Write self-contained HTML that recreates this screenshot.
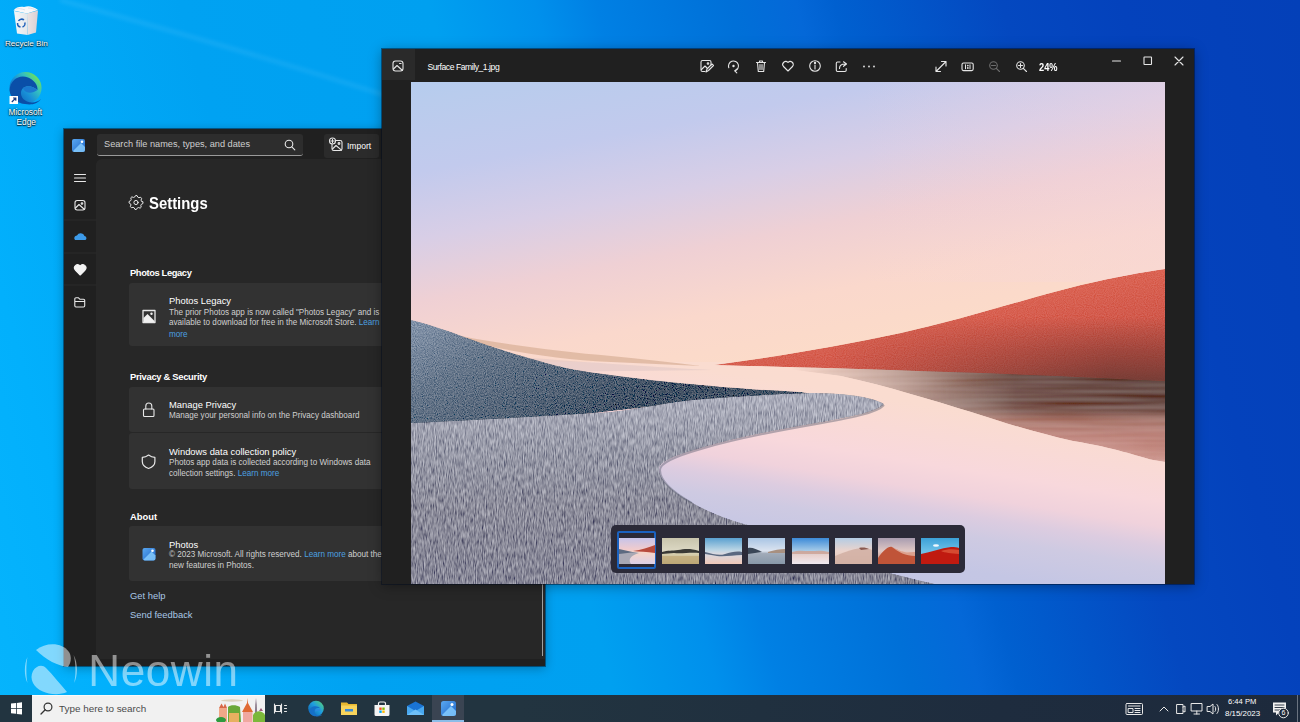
<!DOCTYPE html>
<html><head><meta charset="utf-8">
<style>
*{box-sizing:border-box;margin:0;padding:0}
html,body{width:1300px;height:722px;overflow:hidden;font-family:"Liberation Sans",sans-serif}
body{position:relative;background:#0078d7}
.abs{position:absolute}
#desk{position:absolute;left:0;top:0;width:1300px;height:722px;
 background:linear-gradient(75deg,#06b4fc 0%,#02b0fc 7.8%,#00a2f2 25%,#00a0f0 41.6%,#0090ec 48.7%,#0080e4 52.8%,#0070d8 61.7%,#0468d8 66.2%,#0060d0 68.8%,#0448c0 80%,#0442bc 88%,#0440b8 100%);}
.txt{position:absolute;white-space:nowrap;line-height:1}
/* settings window */
#sw{position:absolute;left:64px;top:129px;width:481px;height:537px;background:#202020;box-shadow:0 0 0 1px rgba(0,10,30,.45),0 2px 10px rgba(0,0,0,.3)}
#sp{position:absolute;left:32px;top:30px;width:449px;height:500px;background:#272727;border-radius:6px 0 0 0}
.card{position:absolute;left:31px;width:260px;background:#323232;border-radius:3px}
.hdr{position:absolute;left:66px;font-weight:bold;color:#fff;font-size:9.4px;white-space:nowrap;line-height:1}
.ct{position:absolute;left:105px;color:#fff;font-size:9.4px;white-space:nowrap;line-height:1}
.cd{position:absolute;left:105px;color:#d0d0d0;font-size:8.15px;white-space:nowrap;line-height:1}
.lk{color:#4ca0e0}
/* photos window */
#pw{position:absolute;left:382px;top:49px;width:812px;height:535px;background:#202020;box-shadow:0 0 0 1px rgba(0,10,30,.45),0 2px 12px rgba(0,0,0,.35)}
#tb{position:absolute;left:0;top:695px;width:1300px;height:27px;background:linear-gradient(90deg,#223440 0%,#223440 40%,#1e2c3e 77%,#1d2a3c 100%)}
</style></head>
<body>
<div id="desk"></div>
<svg class="abs" style="left:0;top:0" width="1300" height="722" viewBox="0 0 1300 722"><defs><filter id="rb"><feGaussianBlur stdDeviation="2"/></filter></defs>
<path d="M60 0 C150 25 260 55 400 100" stroke="#7fd4ff" stroke-width="3" fill="none" opacity=".22" filter="url(#rb)"/>

</svg>

<!-- desktop icons -->
<svg class="abs" style="left:0;top:0" width="60" height="130" viewBox="0 0 60 130">
 <defs>
  <linearGradient id="rbf" x1="0" y1="0" x2="1" y2="0"><stop offset="0" stop-color="#f4f6f8"/><stop offset="1" stop-color="#e4e8ec"/></linearGradient>
  <linearGradient id="rbs" x1="0" y1="0" x2="1" y2="0"><stop offset="0" stop-color="#ece4e4"/><stop offset="1" stop-color="#d8d0d4"/></linearGradient>
  <linearGradient id="eg1" x1="0.1" y1="0.9" x2="0.9" y2="0.2"><stop offset="0" stop-color="#0c5ab0"/><stop offset=".45" stop-color="#1890d8"/><stop offset=".75" stop-color="#34c0c0"/><stop offset="1" stop-color="#6ae060"/></linearGradient>
 </defs>
 <!-- recycle bin -->
 <path d="M14 11 L27 13.5 L27.5 35 L17 33.5Z" fill="url(#rbf)"/>
 <path d="M27 13.5 L38 10.5 L36 32.5 L27.5 35Z" fill="url(#rbs)"/>
 <path d="M13.5 10.5 C16 7 20 6.5 24 7 C28 5.5 33 6 38 10 L27 13.5 Z" fill="#f8f8fa"/>
 <path d="M16 9 C19 8 22 9 25 10 M28 8 C31 8 34 9 36 10" stroke="#d8dce4" stroke-width=".8" fill="none"/>
 <path d="M18.5 21 A3.6 3.6 0 0 1 24 20 M24.8 22.5 A3.6 3.6 0 0 1 22.5 27 M20.5 27 A3.6 3.6 0 0 1 17.6 23" stroke="#1f5fb8" stroke-width="1.5" fill="none"/>
 <!-- edge -->
 <circle cx="25.5" cy="88" r="16" fill="url(#eg1)"/>
 <path d="M9.6 90 C10.5 79 20 74 28 77.5 C34 80 38 85 37.5 90 C33 86 27 85 23 88 C19 92 21 99 27 101.5 C32 103.5 38 102 41 99 C37 104.5 31 105 25 104 C16 102.5 9.8 97 9.6 90Z" fill="#0a4fa8"/>
 <path d="M23 88 C27 85 33 86 37.5 90 C35 92 31 93 28 92.5 C25 92 23.5 90 23 88Z" fill="#1b78d0"/>
 <rect x="9.5" y="96" width="8.5" height="8" fill="#fff"/>
 <path d="M11.8 102 L15.8 98 M13 98 H15.8 V100.8" stroke="#1a3a80" stroke-width="1.2" fill="none"/>
</svg>
<div class="txt" style="left:5px;top:40px;font-size:8.1px;color:#fff;text-shadow:0 0 2px rgba(0,0,0,.9),0 1px 1px rgba(0,0,0,.8)">Recycle Bin</div>
<div class="txt" style="left:8.5px;top:107.5px;font-size:8.3px;color:#fff;text-shadow:0 0 2px rgba(0,0,0,.9),0 1px 1px rgba(0,0,0,.8)">Microsoft</div>
<div class="txt" style="left:16.5px;top:117.5px;font-size:8.3px;color:#fff;text-shadow:0 0 2px rgba(0,0,0,.9),0 1px 1px rgba(0,0,0,.8)">Edge</div>

<!-- settings window -->
<div id="sw">
 
 <div class="abs" style="left:33px;top:5px;width:206px;height:22px;background:#2d2d2d;border-radius:3px;border-bottom:1px solid #9a9a9a"></div>
 <div class="txt" style="left:40px;top:11px;font-size:9.2px;color:#cfcfcf">Search file names, types, and dates</div>
 <div class="abs" style="left:260px;top:5px;width:55px;height:24px;background:#2b2b2b;border-radius:3px"></div>
 <div class="txt" style="left:283px;top:13px;font-size:8.5px;color:#fff">Import</div>
 <div id="sp"></div>
 <div class="txt" style="left:84.5px;top:65.5px;font-size:17px;font-weight:bold;color:#fff;transform:scaleX(0.875);transform-origin:0 0">Settings</div>
 <div class="hdr" style="top:139px;letter-spacing:-0.4px">Photos Legacy</div>
 <div class="card" style="left:65px;top:154px;height:63px"></div>
 <div class="ct" style="top:167px">Photos Legacy</div>
 <div class="cd" style="top:180px">The prior Photos app is now called "Photos Legacy" and is</div>
 <div class="cd" style="top:190px">available to download for free in the Microsoft Store. <span class="lk">Learn</span></div>
 <div class="cd" style="top:202px"><span class="lk">more</span></div>
 <div class="hdr" style="top:243px;letter-spacing:-0.3px">Privacy &amp; Security</div>
 <div class="card" style="left:65px;top:258px;height:45px"></div>
 <div class="ct" style="top:271px">Manage Privacy</div>
 <div class="cd" style="top:283px">Manage your personal info on the Privacy dashboard</div>
 <div class="card" style="left:65px;top:304px;height:56px"></div>
 <div class="ct" style="top:318px">Windows data collection policy</div>
 <div class="cd" style="top:330px">Photos app data is collected according to Windows data</div>
 <div class="cd" style="top:341px">collection settings. <span class="lk">Learn more</span></div>
 <div class="hdr" style="top:383px">About</div>
 <div class="card" style="left:65px;top:397px;height:55px"></div>
 <div class="ct" style="top:411px">Photos</div>
 <div class="cd" style="top:422px">© 2023 Microsoft. All rights reserved. <span class="lk">Learn more</span> about the</div>
 <div class="cd" style="top:433px">new features in Photos.</div>
 <div class="txt" style="left:66px;top:462px;font-size:9.4px;color:#a9c8e6">Get help</div>
 <div class="txt" style="left:66px;top:481px;font-size:9.4px;color:#a9c8e6">Send feedback</div>
 <div class="abs" style="left:478px;top:455px;width:1px;height:72px;background:#a0a0a0"></div>
</div>

<svg class="abs" style="left:64px;top:129px" width="481" height="537" viewBox="0 0 481 537" fill="none" stroke="#e8e8e8" stroke-width="1.1" stroke-linecap="round" stroke-linejoin="round">
 <defs><linearGradient id="appg" x1="0" y1="0" x2="1" y2="1"><stop offset="0" stop-color="#5aa8f0"/><stop offset="1" stop-color="#1c64c8"/></linearGradient></defs>
 <!-- app icon -->
 <rect x="8" y="10" width="13" height="13" rx="2" fill="url(#appg)" stroke="none"/>
 <path d="M9 22 L17 14 L21 18 L21 21 A2 2 0 0 1 19 23 L10 23Z" fill="#8ad0ff" stroke="none" opacity=".8"/>
 <circle cx="18" cy="12.8" r="1.3" fill="#fff" stroke="none"/>
 <!-- search -->
 <circle cx="225" cy="15" r="3.8"/><path d="M227.8 17.8 L230.8 20.8"/>
 <!-- import icon -->
 <rect x="268" y="11.5" width="10" height="10" rx="1.8"/><path d="M268.5 20 L272 16.5 L277.5 21.2"/><circle cx="275" cy="14.5" r="0.9"/>
 <circle cx="268.5" cy="12" r="3" fill="#202020"/><path d="M268.5 10.3 V13.7 M266.8 12 H270.2"/>
 <!-- hamburger -->
 <path d="M10.5 45.5 H21.5 M10.5 49 H21.5 M10.5 52.5 H21.5"/>
 <!-- gallery -->
 <rect x="11" y="71.5" width="10" height="9.5" rx="2.2"/><path d="M11.5 79 L15 75.5 L20.5 80.5"/><circle cx="18" cy="74.5" r="0.8"/>
 <!-- separators -->
 <path d="M0 91 H33 M0 124 H33 M0 156 H33" stroke="#2b2b2b" stroke-width="1"/>
 <!-- cloud -->
 <path d="M11 111 A2.6 2.6 0 0 1 13 106.6 A4 4 0 0 1 20.5 107 A2.2 2.2 0 0 1 21.5 111Z" fill="#3d9be9" stroke="none"/>
 <!-- heart -->
 <path d="M16.2 146 L11.3 141 A3 3 0 0 1 16.2 136.8 A3 3 0 0 1 21.1 141 Z" fill="#f4f4f4" stroke="#f4f4f4"/>
 <!-- folder -->
 <path d="M10.8 170 A1.2 1.2 0 0 1 12 168.8 H14.5 L16 170.3 H19.5 A1.2 1.2 0 0 1 20.7 171.5 V176.8 A1.2 1.2 0 0 1 19.5 178 H12 A1.2 1.2 0 0 1 10.8 176.8 Z M10.8 172.5 H20.7"/>
 <!-- gear -->
 <path d="M78.99 73.16 L78.92 74.53 L77.27 75.39 L76.80 76.38 L77.19 78.20 L76.17 79.12 L74.39 78.56 L73.36 78.93 L72.34 80.49 L70.97 80.42 L70.11 78.77 L69.12 78.30 L67.30 78.69 L66.38 77.67 L66.94 75.89 L66.57 74.86 L65.01 73.84 L65.08 72.47 L66.73 71.61 L67.20 70.62 L66.81 68.80 L67.83 67.88 L69.61 68.44 L70.64 68.07 L71.66 66.51 L73.03 66.58 L73.89 68.23 L74.88 68.70 L76.70 68.31 L77.62 69.33 L77.06 71.11 L77.43 72.14Z" stroke-width="1"/>
 <circle cx="72" cy="73.5" r="2.1" stroke-width="1"/>
 <!-- photos legacy icon -->
 <rect x="79" y="181.5" width="12" height="12" stroke-width="1.3" />
 <path d="M79.5 193 L79.5 189 L83.5 185 L88 189.5 L90.5 192 L90.5 193Z" fill="#f0f0f0" stroke="none"/>
 <circle cx="87.5" cy="184.8" r="1.2" fill="#f0f0f0" stroke="none"/>
 <!-- lock -->
 <rect x="79.5" y="280" width="10.5" height="7.5" rx="1"/><path d="M81.8 280 V277 A3 3 0 0 1 87.8 277 V280"/>
 <!-- shield -->
 <path d="M84.6 326 C82.5 327.6 80.5 328.3 78.3 328.4 V332.5 C78.3 336 81 338.3 84.6 339.5 C88.2 338.3 90.9 336 90.9 332.5 V328.4 C88.7 328.3 86.7 327.6 84.6 326Z" stroke-width="1.2"/>
 <!-- photos app icon -->
 <rect x="78.5" y="419" width="13" height="12.5" rx="2" fill="url(#appg)" stroke="none"/>
 <path d="M79.5 430.5 L87.5 422.5 L91.5 426.5 L91.5 429.5 A2 2 0 0 1 89.5 431.5 L80.5 431.5Z" fill="#8ad0ff" stroke="none" opacity=".8"/>
 <circle cx="88.5" cy="421.8" r="1.3" fill="#fff" stroke="none"/>
</svg>

<!-- photos window -->
<div id="pw">
 <div class="abs" style="left:0;top:0;width:33px;height:31px;background:#2a2a2a"></div>
 <div class="txt" style="left:45.5px;top:13.5px;font-size:8.6px;color:#fff;letter-spacing:-0.45px">Surface Family_1.jpg</div>
 <div class="txt" style="left:657px;top:13px;font-size:10.5px;font-weight:bold;color:#fff;transform:scaleX(0.88);transform-origin:0 0">24%</div>
 <div id="photo" class="abs" style="left:29px;top:33px;width:754px;height:502px;overflow:hidden;background:#e8d0dc"><svg width="754" height="502" viewBox="0 0 754 502">
<defs>
 <linearGradient id="sky" gradientUnits="userSpaceOnUse" x1="0" y1="3.6" x2="80.7" y2="428.3">
  <stop offset="0" stop-color="#b6ccee"/>
  <stop offset="0.041" stop-color="#b9cced"/>
  <stop offset="0.2" stop-color="#c2caed"/>
  <stop offset="0.352" stop-color="#d8cee6"/>
  <stop offset="0.495" stop-color="#efd0d4"/>
  <stop offset="0.648" stop-color="#fad8cc"/>
  <stop offset="0.818" stop-color="#fcdcc8"/>
  <stop offset="1" stop-color="#fcdcc8"/>
 </linearGradient>
 <linearGradient id="skyx" gradientUnits="userSpaceOnUse" x1="450" y1="0" x2="754" y2="0">
  <stop offset="0" stop-color="#f4d4e0" stop-opacity="0"/>
  <stop offset="1" stop-color="#f4d4e0" stop-opacity="0.35"/>
 </linearGradient>
 <linearGradient id="water" gradientUnits="userSpaceOnUse" x1="0" y1="160" x2="-53" y2="491.5">
  <stop offset="0" stop-color="#fcdcd0"/>
  <stop offset="0.235" stop-color="#fadcd0"/>
  <stop offset="0.41" stop-color="#f8d8dc"/>
  <stop offset="0.485" stop-color="#f0d2dc"/>
  <stop offset="0.544" stop-color="#dccce0"/>
  <stop offset="0.603" stop-color="#cecae2"/>
  <stop offset="0.706" stop-color="#c4c6e4"/>
  <stop offset="1" stop-color="#c0c4e4"/>
 </linearGradient>
 <linearGradient id="red" gradientUnits="userSpaceOnUse" x1="600" y1="190" x2="620" y2="300">
  <stop offset="0" stop-color="#e06a58"/>
  <stop offset="0.5" stop-color="#d45c4e"/>
  <stop offset="1" stop-color="#c85448"/>
 </linearGradient>
 <linearGradient id="redsh" gradientUnits="userSpaceOnUse" x1="0" y1="235" x2="0" y2="298">
  <stop offset="0" stop-color="#7a3a34" stop-opacity="0"/>
  <stop offset="0.55" stop-color="#7a3a34" stop-opacity="0.55"/>
  <stop offset="1" stop-color="#6a3a34" stop-opacity="0.85"/>
 </linearGradient>
 <linearGradient id="redshx" gradientUnits="userSpaceOnUse" x1="420" y1="0" x2="700" y2="0">
  <stop offset="0" stop-color="#fff" stop-opacity="0"/>
  <stop offset="1" stop-color="#fff" stop-opacity="1"/>
 </linearGradient>
 <mask id="redm"><rect x="300" y="150" width="454" height="160" fill="url(#redshx)"/></mask>
 <linearGradient id="refl" gradientUnits="userSpaceOnUse" x1="0" y1="292" x2="0" y2="380">
  <stop offset="0" stop-color="#5e403a" stop-opacity="0.97"/>
  <stop offset="0.3" stop-color="#62453f" stop-opacity="0.95"/>
  <stop offset="0.42" stop-color="#704c46" stop-opacity="0.92"/>
  <stop offset="0.52" stop-color="#a06a60" stop-opacity="0.9"/>
  <stop offset="0.7" stop-color="#b87870" stop-opacity="0.88"/>
  <stop offset="1" stop-color="#c88a82" stop-opacity="0.8"/>
 </linearGradient>
 <linearGradient id="reflx" gradientUnits="userSpaceOnUse" x1="380" y1="0" x2="754" y2="0">
  <stop offset="0" stop-color="#fff" stop-opacity="0"/>
  <stop offset="0.3" stop-color="#fff" stop-opacity="0.4"/>
  <stop offset="0.6" stop-color="#fff" stop-opacity="0.9"/>
  <stop offset="1" stop-color="#fff" stop-opacity="1"/>
 </linearGradient>
 <mask id="reflm"><rect x="290" y="280" width="464" height="120" fill="url(#reflx)"/></mask>
 <linearGradient id="blue" gradientUnits="userSpaceOnUse" x1="0" y1="240" x2="100" y2="400">
  <stop offset="0" stop-color="#8494aa"/>
  <stop offset="0.35" stop-color="#66768a"/>
  <stop offset="1" stop-color="#445264"/>
 </linearGradient>
 <linearGradient id="grass" gradientUnits="userSpaceOnUse" x1="0" y1="310" x2="0" y2="502">
  <stop offset="0" stop-color="#acaebc"/>
  <stop offset="0.04" stop-color="#aaacba"/>
  <stop offset="0.33" stop-color="#9698a6"/>
  <stop offset="0.61" stop-color="#8c8c9a"/>
  <stop offset="1" stop-color="#868696"/>
 </linearGradient>
 <filter id="gtex" x="0" y="0" width="100%" height="100%">
  <feTurbulence type="fractalNoise" baseFrequency="0.9 0.14" numOctaves="2" seed="5" result="n"/>
  <feColorMatrix in="n" type="matrix" values="1 0 0 0 0  1 0 0 0 0  1 0 0 0 0  0 0 0 0 1" result="g"/>
  <feComposite in="SourceGraphic" in2="g" operator="arithmetic" k1="0" k2="1" k3="0.6" k4="-0.3" result="c"/>
  <feComposite in="c" in2="SourceAlpha" operator="in"/>
 </filter>
 <filter id="btex" x="0" y="0" width="100%" height="100%">
  <feTurbulence type="fractalNoise" baseFrequency="0.9" numOctaves="2" seed="9" result="n"/>
  <feColorMatrix in="n" type="matrix" values="1 0 0 0 0  1 0 0 0 0  1 0 0 0 0  0 0 0 0 1" result="g"/>
  <feComposite in="SourceGraphic" in2="g" operator="arithmetic" k1="0" k2="1" k3="0.35" k4="-0.175" result="c"/>
  <feComposite in="c" in2="SourceAlpha" operator="in"/>
 </filter>
 <filter id="rtex" x="0" y="0" width="100%" height="100%">
  <feTurbulence type="fractalNoise" baseFrequency="0.9" numOctaves="1" seed="2" result="n"/>
  <feColorMatrix in="n" type="matrix" values="1 0 0 0 0  1 0 0 0 0  1 0 0 0 0  0 0 0 0 1" result="g"/>
  <feComposite in="SourceGraphic" in2="g" operator="arithmetic" k1="0" k2="1" k3="0.12" k4="-0.06" result="c"/>
  <feComposite in="c" in2="SourceAlpha" operator="in"/>
 </filter>
<filter id="wtex" x="0" y="0" width="100%" height="100%">
  <feTurbulence type="fractalNoise" baseFrequency="0.01 0.25" numOctaves="1" seed="11" result="n"/>
  <feColorMatrix in="n" type="matrix" values="1 0 0 0 0  1 0 0 0 0  1 0 0 0 0  0 0 0 0 1" result="g"/>
  <feComposite in="SourceGraphic" in2="g" operator="arithmetic" k1="0" k2="1" k3="0.16" k4="-0.08" result="c"/>
  <feComposite in="c" in2="SourceAlpha" operator="in"/>
 </filter>
</defs>
<rect width="754" height="502" fill="url(#sky)"/>
<rect x="450" width="304" height="200" fill="url(#skyx)"/>

<!-- water -->
<rect y="280" width="754" height="222" fill="url(#water)"/>
<!-- far tan shore -->
<path d="M50 254 C90 262 150 270 200 274 C230 277 260 280 290 284 L200 280 C140 277 90 268 50 257Z" fill="#dcb49c" opacity="0.8"/>
<path d="M120 276 C200 282 260 286 300 288 L120 290Z" fill="#dcc4c4" opacity="0.5"/>
<!-- red reflection -->
<g mask="url(#reflm)">
<path d="M303 280 L754 290 L754 380 L742 378 C725 374 705 366 662 359 C630 352 600 343 560 330 C520 318 480 305 430 294 C390 288 350 284 303 280Z" fill="url(#refl)" filter="url(#wtex)"/>
</g>
<!-- red hill -->
<path d="M303 283 C370 274 430 264 490 251 C550 238 610 218 670 203 C705 195 732 190 754 187 L754 299 C640 293 460 287 303 283Z" fill="url(#red)" filter="url(#rtex)"/>
<path d="M303 283 C370 274 430 264 490 251 C550 238 610 218 670 203 C705 195 732 190 754 187 L754 299 C640 293 460 287 303 283Z" fill="url(#redsh)" mask="url(#redm)"/>
<!-- blue hill -->
<path d="M0 238 C25 244 45 252 62 258 C90 268 110 274 125 278 C150 286 175 290 200 293 C230 297 255 300 280 302 C320 306 350 308 390 310 L473 324 C420 318 330 316 280 320 C240 324 200 330 150 334 C100 338 50 340 0 342Z" fill="url(#blue)" filter="url(#btex)"/>
<!-- grass -->
<path d="M0 341 C60 338 140 334 200 330 C240 325 260 320 280 318 C320 315 360 312 400 311 C430 311 460 314 473 322 C466 330 440 335 400 342 C360 349 320 357 290 366 C262 374 248 380 248 387 C248 398 262 410 280 420 C300 432 325 441 350 446 C400 470 470 490 524 502 L0 502Z" fill="url(#grass)" filter="url(#gtex)"/>
<!-- shore shadow -->
<path d="M473 323 C466 331 440 336 400 343 C360 350 320 358 290 367 C262 375 249 381 249 388 C249 399 263 411 281 421" fill="none" stroke="#5a6070" stroke-width="2" opacity="0.45"/>
</svg></div>
</div>

<svg class="abs" style="left:382px;top:49px" width="812" height="33" viewBox="0 0 812 33" fill="none" stroke="#e6e6e6" stroke-width="1.1" stroke-linecap="round" stroke-linejoin="round">
 <!-- app icon -->
 <rect x="11" y="12" width="10" height="10" rx="2.5"/><path d="M11.5 20 L15 16.5 L20.5 21.5 M17.5 14.5 l1.6 0" />
 <!-- edit -->
 <path d="M329 16 V13 a1.5 1.5 0 0 0 -1.5 -1.5 H320.5 A1.5 1.5 0 0 0 319 13 V21 a1.5 1.5 0 0 0 1.5 1.5 H323"/><path d="M319.5 20.5 L323 17 L325 19"/><circle cx="326" cy="14.5" r="0.8"/><path d="M324 23 L325 20 L330 15 L331.5 16.5 L326.5 21.5 Z"/>
 <!-- rotate -->
 <path d="M346.8 18.8 A5 5 0 1 1 353 21.8"/><path d="M355 20 L352.8 21.9 L354.8 23.8"/><circle cx="351.5" cy="17" r="1.2" fill="#e6e6e6" stroke="none"/>
 <!-- delete -->
 <path d="M374.5 13.5 H383.5 M377.5 13.5 V12 H380.5 V13.5 M375.5 13.5 L376.3 22.5 H381.7 L382.5 13.5"/><path d="M378 15.5 V20.5 M380 15.5 V20.5"/>
 <!-- heart -->
 <path d="M406 22 L401.5 17.5 A2.7 2.7 0 0 1 406 13.5 A2.7 2.7 0 0 1 410.5 17.5 Z"/>
 <!-- info -->
 <circle cx="433" cy="17" r="5.3"/><path d="M433 16 V20"/><circle cx="433" cy="14" r="0.6" fill="#e6e6e6"/>
 <!-- share -->
 <path d="M458 13 H455.5 a1.2 1.2 0 0 0 -1.2 1.2 V21.3 a1.2 1.2 0 0 0 1.2 1.2 H463 a1.2 1.2 0 0 0 1.2 -1.2 V19.5"/><path d="M457.5 19.5 C457.5 16.5 459.5 15 463 15 M461.5 12.8 L464.5 15 L461.5 17.3"/>
 <!-- more -->
 <circle cx="482" cy="17.5" r="0.9" fill="#e6e6e6" stroke="none"/><circle cx="487" cy="17.5" r="0.9" fill="#e6e6e6" stroke="none"/><circle cx="492" cy="17.5" r="0.9" fill="#e6e6e6" stroke="none"/>
 <!-- expand -->
 <path d="M554 22.5 L564 12.5 M559.5 12.5 H564 V17 M554 18 V22.5 H558.5"/>
 <!-- 1:1 -->
 <rect x="580" y="14" width="11.2" height="7.6" rx="1.5"/><path d="M583.5 15.8 V19.8 M588 15.8 V19.8" stroke-width="1"/><circle cx="585.8" cy="16.6" r="0.35" fill="#e6e6e6"/><circle cx="585.8" cy="19" r="0.35" fill="#e6e6e6"/>
 <!-- zoom out dim -->
 <g stroke="#6e6e6e"><circle cx="611.5" cy="16.5" r="3.8"/><path d="M614.3 19.3 L617.5 22.5 M609.5 16.5 H613.5"/></g>
 <!-- zoom in -->
 <circle cx="638.5" cy="16.5" r="3.8"/><path d="M641.3 19.3 L644.5 22.5 M636.5 16.5 H640.5 M638.5 14.5 V18.5"/>
 <!-- min max close -->
 <path d="M730.5 12 H738.5"/>
 <rect x="762" y="8" width="7.5" height="7.5" rx="0.5"/>
 <path d="M793 8 L801 16 M801 8 L793 16"/>
</svg>

<!-- thumbnail strip -->
<div class="abs" style="left:611px;top:525px;width:354px;height:48px;background:#2b2a38;border-radius:5px"></div>
<div class="abs" style="left:617px;top:530.5px;width:39px;height:38px;border:2px solid #1b62c0;border-radius:2px"></div>
<svg class="abs" style="left:619px;top:538px" width="36" height="26" viewBox="0 0 36 26"><defs><linearGradient id="t1" x1="0" y1="0" x2="0" y2="1"><stop offset="0" stop-color="#c6c4ea"/><stop offset=".45" stop-color="#f2cccc"/><stop offset=".55" stop-color="#f6d4c8"/><stop offset="1" stop-color="#dcd0e6"/></linearGradient></defs><rect width="36" height="26" fill="url(#t1)"/><path d="M14 13 C22 12 30 9 36 7 L36 15 C28 14 20 13.5 14 13Z" fill="#b84a3c"/><path d="M0 11 C6 12 12 14 18 15 L0 17Z" fill="#5c6a80"/><path d="M0 16 C8 15 16 14 20 15 C14 17 8 20 12 26 L0 26Z" fill="#a8a8b4"/></svg>
<svg class="abs" style="left:662px;top:538px" width="37" height="26" viewBox="0 0 37 26"><defs><linearGradient id="t2" x1="0" y1="0" x2="0" y2="1"><stop offset="0" stop-color="#c8c4ac"/><stop offset=".5" stop-color="#dcd8c4"/><stop offset=".6" stop-color="#d8d0b0"/><stop offset="1" stop-color="#b8a470"/></linearGradient></defs><rect width="37" height="26" fill="url(#t2)"/><path d="M0 14 C6 12 10 13 16 12 C22 11 28 10 37 13 L37 15 C28 14 20 16 12 15 C8 15 4 16 0 16Z" fill="#3a3a36"/><rect y="18" width="37" height="8" fill="#c0aa78" opacity=".7"/></svg>
<svg class="abs" style="left:705px;top:538px" width="37" height="26" viewBox="0 0 37 26"><defs><linearGradient id="t3" x1="0" y1="0" x2="0" y2="1"><stop offset="0" stop-color="#5aa0d0"/><stop offset=".45" stop-color="#b8d4e4"/><stop offset=".6" stop-color="#d8d8e0"/><stop offset="1" stop-color="#f0c8b8"/></linearGradient></defs><rect width="37" height="26" fill="url(#t3)"/><path d="M0 14 C8 16 14 18 20 16 C26 14 32 13 37 14 L37 17 C28 17 20 19 12 18 C6 17 2 16 0 16Z" fill="#5a6880"/></svg>
<svg class="abs" style="left:748px;top:538px" width="37" height="26" viewBox="0 0 37 26"><defs><linearGradient id="t4" x1="0" y1="0" x2="0" y2="1"><stop offset="0" stop-color="#a8c4e4"/><stop offset=".5" stop-color="#dce4f0"/><stop offset=".6" stop-color="#a0aab8"/><stop offset="1" stop-color="#8898a8"/></linearGradient></defs><rect width="37" height="26" fill="url(#t4)"/><path d="M0 10 C4 9 8 11 14 14 L0 16Z" fill="#3a4656"/><path d="M20 14 C26 12 32 11 37 11 L37 15 L20 15Z" fill="#a89080"/></svg>
<svg class="abs" style="left:792px;top:538px" width="37" height="26" viewBox="0 0 37 26"><defs><linearGradient id="t5" x1="0" y1="0" x2="0" y2="1"><stop offset="0" stop-color="#3c8ad8"/><stop offset=".5" stop-color="#a8cce8"/><stop offset=".65" stop-color="#e8d0cc"/><stop offset="1" stop-color="#f0eaf0"/></linearGradient></defs><rect width="37" height="26" fill="url(#t5)"/><path d="M0 14 C6 12 12 13 18 13 C24 13 30 12 37 14 L37 16 L0 16Z" fill="#d0a090" opacity=".8"/></svg>
<svg class="abs" style="left:835px;top:538px" width="37" height="26" viewBox="0 0 37 26"><defs><linearGradient id="t6" x1="0" y1="0" x2="0" y2="1"><stop offset="0" stop-color="#b4cce4"/><stop offset=".5" stop-color="#ecd4cc"/><stop offset="1" stop-color="#e0c4b8"/></linearGradient></defs><rect width="37" height="26" fill="url(#t6)"/><path d="M0 18 C10 14 20 10 28 10 C32 10 35 11 37 12 L37 26 L0 26Z" fill="#d0aca0" opacity=".8"/><path d="M24 10 C28 9 32 10 34 11 L26 12Z" fill="#8a5a50"/></svg>
<svg class="abs" style="left:878px;top:538px" width="37" height="26" viewBox="0 0 37 26"><defs><linearGradient id="t7" x1="0" y1="0" x2="0" y2="1"><stop offset="0" stop-color="#a89cb0"/><stop offset=".5" stop-color="#e0c8c4"/><stop offset="1" stop-color="#c88070"/></linearGradient></defs><rect width="37" height="26" fill="url(#t7)"/><path d="M0 20 C6 12 10 8 14 9 C20 12 26 16 37 14 L37 26 L0 26Z" fill="#c05438"/><path d="M14 9 C20 12 26 15 37 14 L37 18 C28 18 20 14 14 9Z" fill="#e8c0b0" opacity=".7"/></svg>
<svg class="abs" style="left:921px;top:538px" width="38" height="26" viewBox="0 0 38 26"><defs><linearGradient id="t8" x1="0" y1="0" x2="0" y2="1"><stop offset="0" stop-color="#3ca0d8"/><stop offset=".5" stop-color="#6cc0e8"/><stop offset="1" stop-color="#80c8e8"/></linearGradient></defs><rect width="38" height="26" fill="url(#t8)"/><ellipse cx="15" cy="7.5" rx="3" ry="1.2" fill="#f0f8ff"/><path d="M0 16 C10 14 20 10 30 9 C34 9 36 9 38 10 L38 26 L0 26Z" fill="#c01a10"/><path d="M20 13 C26 11 32 11 38 12 L38 16 C30 15 24 15 20 13Z" fill="#e06040" opacity=".7"/></svg>

<svg class="abs" style="left:0;top:630px" width="260" height="70" viewBox="0 630 260 70">
 <g fill="#ffffff" opacity="0.5">
  <path d="M36 650 C46 642 62 642 69 652 C72 657 71 663 68 667 C58 666 46 660 36 650Z"/>
  <path d="M33 671 C36 666 42 664 46 668 C53 675 60 684 67 692 C56 697 38 693 33 683 C31 679 31 675 33 671Z"/>
  <path d="M73.5 655 C78 662 78 676 74 683 C76 676 76 662 73.5 655Z" />
  <path d="M27.5 657 C24 664 24 676 27.5 683 C26 676 26 664 27.5 657Z" />
 </g>
</svg>
<div class="txt" style="left:88.3px;top:648.8px;font-size:44px;letter-spacing:0.6px;color:#fff;opacity:.5">Neowin</div>

<div id="tb">
 <svg class="abs" style="left:0;top:0" width="1300" height="27" viewBox="0 0 1300 27">
  <!-- windows logo -->
  <path d="M11 8.5 L16 8 L16 13 L11 13Z M16.8 7.9 L22 7.2 L22 13 L16.8 13Z M11 13.8 L16 13.8 L16 18.8 L11 18.3Z M16.8 13.8 L22 13.8 L22 19.6 L16.8 18.9Z" fill="#fff"/>
 </svg>
 <div class="abs" style="left:32px;top:0;width:233px;height:27px;background:#f1f1f1;border-top:1px solid #fafafa"></div>
 <svg class="abs" style="left:0;top:0" width="1300" height="27" viewBox="0 0 1300 27" fill="none" stroke-linecap="round" stroke-linejoin="round">
  <!-- search magnifier -->
  <circle cx="48" cy="12" r="3.9" stroke="#333" stroke-width="1.2"/><path d="M45.2 14.8 L41 19" stroke="#333" stroke-width="1.3"/>
  <!-- castle -->
  <g stroke="none">
   <ellipse cx="232" cy="5.5" rx="11" ry="1.2" fill="#d8cbb0" opacity=".8"/>
   <path d="M219 13 L221.5 8.5 L223.5 12 L225 8.5 L227 13 L227 27 L219 27Z" fill="#d86848"/>
   <rect x="219" y="13" width="8" height="14" fill="#f0a888"/>
   <path d="M228 12 C230 10 236 9.5 240 12 L241 27 L228 27Z" fill="#6aa838"/>
   <rect x="229" y="18" width="10" height="9" fill="#e8b060"/>
   <path d="M247.5 3 L248 8 L253 17 L242 17 L247 8Z" fill="#e06a34"/>
   <rect x="243" y="17" width="9.5" height="10" fill="#f0a8a0"/>
   <path d="M256 3 L256.8 10 L257.5 27 L254.5 27 L255.2 10Z" fill="#8a7a8a"/>
   <path d="M253 20 C256 15 262 15 265 20 L265 27 L253 27Z" fill="#7cb83a"/>
   <path d="M259 16 L261 13 L263 16Z" fill="#9a5a7a"/>
   <ellipse cx="221" cy="25" rx="5" ry="3" fill="#2e9a3e"/>
  </g>
  <!-- task view -->
  <g stroke="#e8e8e8" stroke-width="1.1"><path d="M274.5 9 V18 M281.5 9 V18"/><rect x="275.5" y="10.5" width="5" height="6"/><path d="M284.5 10.5 H286.5 M284.5 13.5 H286.5 M284.5 16.5 H286.5"/></g>
  <!-- edge -->
  <defs><linearGradient id="edg" x1="0" y1="1" x2="1" y2="0"><stop offset="0" stop-color="#0c59a4"/><stop offset=".55" stop-color="#1e9de0"/><stop offset="1" stop-color="#5ed86a"/></linearGradient></defs>
  <circle cx="316" cy="13.5" r="7.8" fill="url(#edg)" stroke="none"/>
  <path d="M309 16 C310 11 317 9.5 320.5 13.5 C318 12.5 314.5 13 314.5 16.5 C314.5 20 318.5 21.5 322.5 19.5 C320 22.5 311 22.5 309 16Z" fill="#1670c8" stroke="none"/>
  <path d="M315 16.5 C315 14 318 13.5 320.5 14 L320.5 15.5 L315.5 16.5Z" fill="#2a8ae0" stroke="none"/>
  <!-- explorer -->
  <path d="M341 7.5 H347 L348.5 9 H357 V20 H341Z" fill="#e8b830" stroke="none"/>
  <rect x="341" y="10.5" width="16" height="9.5" fill="#f8d45c" stroke="none"/>
  <rect x="345" y="14" width="8" height="2.5" fill="#3a8ad8" stroke="none"/>
  <!-- store -->
  <path d="M374.5 10 H389.5 V19.5 A1.5 1.5 0 0 1 388 21 H376 A1.5 1.5 0 0 1 374.5 19.5Z" fill="#f4f4f4" stroke="none"/>
  <path d="M378.5 10 V8.5 A1.5 1.5 0 0 1 380 7 H384 A1.5 1.5 0 0 1 385.5 8.5 V10" stroke="#f4f4f4" stroke-width="1.2"/>
  <rect x="379.3" y="12.5" width="2.4" height="2.4" fill="#f25022" stroke="none"/><rect x="382.3" y="12.5" width="2.4" height="2.4" fill="#7fba00" stroke="none"/>
  <rect x="379.3" y="15.5" width="2.4" height="2.4" fill="#00a4ef" stroke="none"/><rect x="382.3" y="15.5" width="2.4" height="2.4" fill="#ffb900" stroke="none"/>
  <!-- mail -->
  <path d="M407 11 L415.5 6.5 L424 11 V20 H407Z" fill="#1a74d4" stroke="none"/>
  <path d="M407 11 L415.5 16 L424 11 V20 H407Z" fill="#48a8f0" stroke="none"/>
  <path d="M407 20 L415.5 14.5 L424 20Z" fill="#6ec0f8" stroke="none"/>
 </svg>
 <!-- photos active -->
 <div class="abs" style="left:432px;top:0;width:32px;height:27px;background:#3a4452"></div>
 <div class="abs" style="left:432px;top:25px;width:32px;height:2px;background:#8cbde8"></div>
 <svg class="abs" style="left:441px;top:6px" width="15" height="15" viewBox="0 0 15 15"><defs><linearGradient id="pg2" x1="0" y1="0" x2="1" y2="1"><stop offset="0" stop-color="#5aa8f0"/><stop offset="1" stop-color="#1c64c8"/></linearGradient></defs><rect x="0" y="0" width="15" height="15" rx="2.5" fill="url(#pg2)"/><path d="M1 14 L10 5 L15 10 L15 12.5 A2.5 2.5 0 0 1 12.5 15 L2 15Z" fill="#8ad0ff" opacity=".8"/><circle cx="11" cy="3.5" r="1.5" fill="#fff"/></svg>
 <!-- tray -->
 <svg class="abs" style="left:0;top:0" width="1300" height="27" viewBox="0 0 1300 27" fill="none" stroke="#e8e8e8" stroke-width="1" stroke-linecap="round" stroke-linejoin="round">
  <rect x="1126" y="8.5" width="16.5" height="11" rx="1"/><path d="M1128.5 11 H1140 M1128.5 13.5 H1133 V17.5 H1128.5Z M1135 13.5 H1140 M1135 15.5 H1140 M1135 17.5 H1140"/>
  <path d="M1160 16 L1164 12 L1168 16"/>
  <path d="M1177 9.5 H1183 V18.5 H1177 Z M1183 12 L1185 11 V17 L1183 16"/>
  <path d="M1191.5 8.5 H1202 V16 H1191.5Z M1196.8 16 V19 M1194 19 H1199.5"/>
  <path d="M1207.5 11.5 H1210 L1213 9 V19 L1210 16.5 H1207.5Z M1215 11.5 C1216 12.5 1216 15.5 1215 16.5 M1217 9.5 C1219 11.5 1219 16.5 1217 18.5"/>
  <!-- notification -->
  <path d="M1273 7.5 H1286 V17.5 H1279 L1276 20.5 V17.5 H1273Z" fill="#f0f0f0" stroke="none"/>
  <path d="M1275 10 H1284 M1275 12.5 H1284 M1275 15 H1280" stroke="#1e2838" stroke-width=".9"/>
  <circle cx="1283.5" cy="18" r="4.8" fill="#1e2838" stroke="#e8e8e8" stroke-width="1"/>
  <path d="M1297.5 0 V27" stroke="#6a7380" stroke-width="1"/>
 </svg>
 <div class="txt" style="left:1281.5px;top:14px;font-size:7px;color:#fff">6</div>
 <div class="txt" style="left:59px;top:9px;font-size:9.9px;color:#4a4a4a">Type here to search</div>
 <div class="txt" style="left:1228px;top:3px;font-size:7.6px;color:#fff">6:44 PM</div>
 <div class="txt" style="left:1225px;top:15px;font-size:7.9px;color:#fff">8/15/2023</div>
</div>

</body></html>
